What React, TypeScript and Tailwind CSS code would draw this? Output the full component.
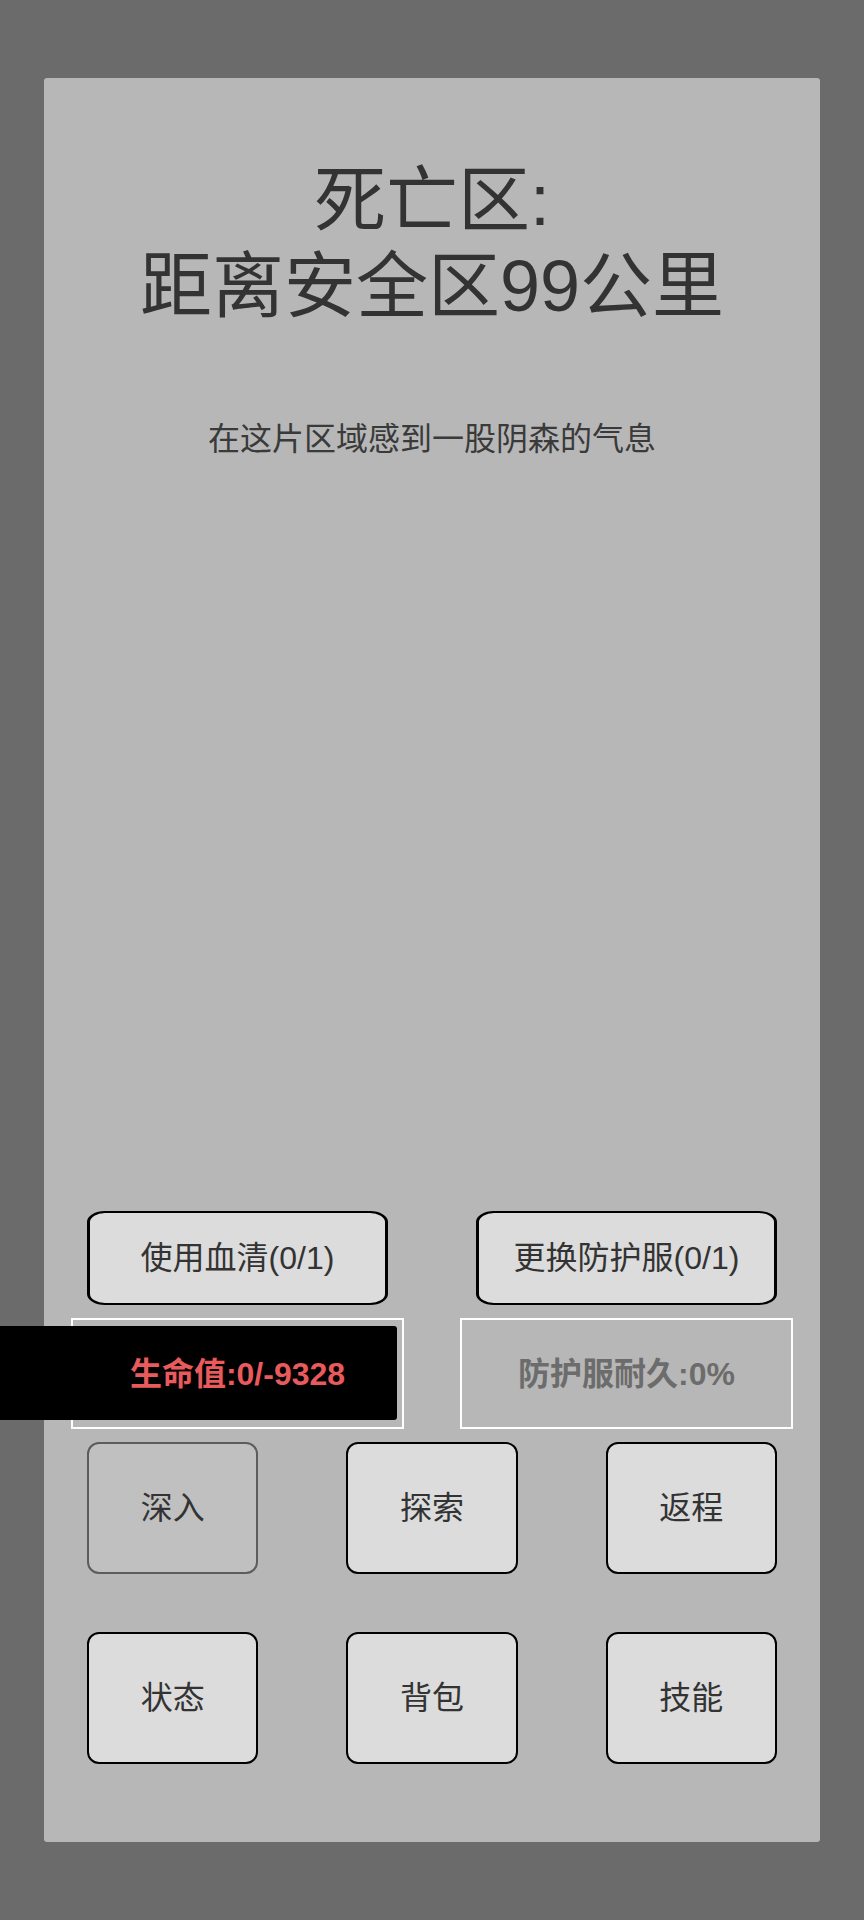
import React from "react";

const font = { fontFamily: '"Liberation Sans", "Noto Sans CJK SC", sans-serif' };

function TopButton({ label }: { label: string }) {
  return (
    <button className="flex-1 h-[94px] rounded-[18px/11px] border-x-[3px] border-y-2 border-black bg-[#dcdcdc] text-[32px] leading-none text-[#333333] flex items-center justify-center">
      {label}
    </button>
  );
}

function GridButton({ label, disabled }: { label: string; disabled?: boolean }) {
  return (
    <button
      className={
        disabled
          ? "h-[132px] rounded-[12px] border-2 border-[#5c5c5c] bg-[#c0c0c0] text-[32px] leading-none text-[#333333] flex items-center justify-center"
          : "h-[132px] rounded-[12px] border-2 border-black bg-[#dcdcdc] text-[32px] leading-none text-[#333333] flex items-center justify-center"
      }
    >
      {label}
    </button>
  );
}

export default function App() {
  return (
    <div className="min-h-[1920px] w-full bg-[#6b6b6b] pt-[78px] px-[44px]" style={font}>
      <div className="h-[1764px] w-full rounded-[3px] bg-[#b7b7b7] flex flex-col">
        <div className="mt-[79px] flex flex-col items-center text-[72px] leading-[86px] text-[#333333]">
          <div className="h-[86px]">死亡区:</div>
          <div className="h-[86px]">距离安全区99公里</div>
        </div>
        <div className="mt-[90px] text-center text-[32px] leading-[40px] text-[#3a3a3a]">
          在这片区域感到一股阴森的气息
        </div>

        <div className="mt-auto pb-[78px] flex flex-col">
          <div className="flex gap-[88px] px-[43px]">
            <TopButton label="使用血清(0/1)" />
            <TopButton label="更换防护服(0/1)" />
          </div>

          <div className="mt-[13px] flex gap-[56px] px-[27px]">
            <div className="relative flex-1 h-[111px] border-2 border-white flex items-center justify-center">
              <div className="absolute left-[-73px] right-[5px] top-[6px] bottom-[7px] bg-black rounded-r-[3px]" />
              <span className="relative text-[32px] leading-none font-bold text-[#e85a5c]">
                生命值:0/-9328
              </span>
            </div>
            <div className="flex-1 h-[111px] border-2 border-white flex items-center justify-center">
              <span className="text-[32px] leading-none font-bold text-[#6c6c6c]">
                防护服耐久:0%
              </span>
            </div>
          </div>

          <div className="mt-[13px] grid grid-cols-3 gap-x-[88px] gap-y-[58px] px-[43px]">
            <GridButton label="深入" disabled />
            <GridButton label="探索" />
            <GridButton label="返程" />
            <GridButton label="状态" />
            <GridButton label="背包" />
            <GridButton label="技能" />
          </div>
        </div>
      </div>
    </div>
  );
}
